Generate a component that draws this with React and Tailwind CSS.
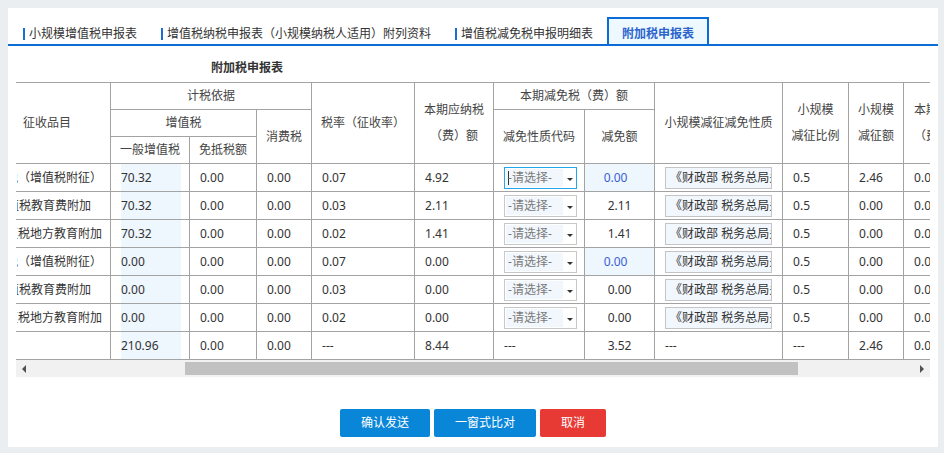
import React from 'react';

const rows = [
  { name: '城市维护建设税（增值税附征）', shift: 'ml-[-83px]', base: '70.32', rate: '0.07', tax: '4.92', jm: '0.00', blue: true, focus: true, jz: '2.46' },
  { name: '增值税教育费附加', shift: 'ml-[-22px]', base: '70.32', rate: '0.03', tax: '2.11', jm: '2.11', jz: '0.00' },
  { name: '增值税地方教育附加', shift: 'ml-[-23px]', base: '70.32', rate: '0.02', tax: '1.41', jm: '1.41', jz: '0.00' },
  { name: '城市维护建设税（增值税附征）', shift: 'ml-[-83px]', base: '0.00', rate: '0.07', tax: '0.00', jm: '0.00', blue: true, jz: '0.00' },
  { name: '增值税教育费附加', shift: 'ml-[-22px]', base: '0.00', rate: '0.03', tax: '0.00', jm: '0.00', jz: '0.00' },
  { name: '增值税地方教育附加', shift: 'ml-[-23px]', base: '0.00', rate: '0.02', tax: '0.00', jm: '0.00', jz: '0.00' },
];

const th = 'border border-[#a3a3a3] p-0 text-center font-normal text-[#444]';
const td = 'border border-[#a3a3a3] p-0 pl-[10px] text-left text-[#333]';

function Select({ focus }) {
  return (
    <div className={focus ? 'flex h-[22px] w-[73px] items-center border border-[#22a7ec] bg-white pl-px' : 'flex h-[22px] w-[73px] items-center border border-[#c8c8c8] bg-white pl-px'}>
      <div className="flex h-[18px] w-[57px] items-center whitespace-nowrap bg-[#f1f7fd] pl-[2px] text-[#7a7a7a]">
        {focus && <span className="h-[14px] w-px bg-[#333]" />}
        <span className={focus ? 'ml-[-1px]' : ''}>-请选择-</span>
      </div>
      <div className="flex flex-1 items-center justify-center pt-[3px]">
        <span className="h-0 w-0 border-x-[3px] border-t-[3px] border-x-transparent border-t-[#333]" />
      </div>
    </div>
  );
}

function Tab({ children }) {
  return (
    <div className="flex h-[20px] items-center text-[#333]">
      <span className="mr-[4px] h-[12px] w-[2px] bg-[#1b6fd2]" />
      {children}
    </div>
  );
}

export default function App() {
  return (
    <div className="h-[453px] w-[944px] bg-[#eaeef0] pl-[8px] pt-[8px] font-['Noto_Sans','Noto_Sans_CJK_SC',sans-serif] text-[12px]">
      <div className="h-[439px] w-[930px] bg-white">
        {/* tabs */}
        <div className="flex h-[38px] items-end border-b-2 border-[#0b6cd6] pl-[15px]">
          <Tab>小规模增值税申报表</Tab>
          <div className="w-[24px]" />
          <Tab>增值税纳税申报表（小规模纳税人适用）附列资料</Tab>
          <div className="w-[24px]" />
          <Tab>增值税减免税申报明细表</Tab>
          <div className="w-[14px]" />
          <div className="flex h-[27px] w-[102px] items-center justify-center border-2 border-b-0 border-[#0b6cd6] bg-[#eef9ff] pt-[5px] font-bold text-[#2a64cc]">
            附加税申报表
          </div>
        </div>

        <div className="flex h-[36px] items-center pl-[203px] pt-[8px] font-bold text-[#333]">附加税申报表</div>

        <div className="ml-[8px] w-[914px] overflow-hidden">
          <table className="ml-[-1px] w-[978px] table-fixed border-collapse">
            <colgroup>
              <col className="w-[95px]" />
              <col className="w-[79px]" />
              <col className="w-[67px]" />
              <col className="w-[55px]" />
              <col className="w-[103px]" />
              <col className="w-[79px]" />
              <col className="w-[91px]" />
              <col className="w-[70px]" />
              <col className="w-[128px]" />
              <col className="w-[66px]" />
              <col className="w-[55px]" />
              <col className="w-[90px]" />
            </colgroup>
            <thead>
              <tr className="h-[27px]">
                <th rowSpan={3} className="border border-[#a3a3a3] p-0 pl-[7px] text-left font-normal text-[#444]">征收品目</th>
                <th colSpan={3} className={th}>计税依据</th>
                <th rowSpan={3} className={th}>税率（征收率）</th>
                <th rowSpan={3} className={th + ' leading-[26px]'}>本期应纳税<br />（费）额</th>
                <th colSpan={2} className={th}>本期减免税（费）额</th>
                <th rowSpan={3} className={th}>小规模减征减免性质</th>
                <th rowSpan={3} className={th + ' leading-[26px]'}>小规模<br />减征比例</th>
                <th rowSpan={3} className={th + ' leading-[26px]'}>小规模<br />减征额</th>
                <th rowSpan={3} className="whitespace-nowrap border border-[#a3a3a3] p-0 pl-[10px] text-left font-normal leading-[26px] text-[#444]">本期已缴税<br />（费）额</th>
              </tr>
              <tr className="h-[27px]">
                <th colSpan={2} className={th}>增值税</th>
                <th rowSpan={2} className={th}>消费税</th>
                <th rowSpan={2} className={th}>减免性质代码</th>
                <th rowSpan={2} className={th}>减免额</th>
              </tr>
              <tr className="h-[27px]">
                <th className={th}>一般增值税</th>
                <th className={th}>免抵税额</th>
              </tr>
            </thead>
            <tbody>
              {rows.map((r, i) => (
                <tr key={i} className="h-[28px]">
                  <td className="border border-[#a3a3a3] p-0 pl-px text-[#333]">
                    <div className="overflow-hidden whitespace-nowrap">
                      <span className={'inline-block ' + r.shift}>{r.name}</span>
                    </div>
                  </td>
                  <td className={td}>
                    <div className="flex h-[27px] w-[60px] items-center bg-[#eef6fe]">{r.base}</div>
                  </td>
                  <td className={td}>0.00</td>
                  <td className={td}>0.00</td>
                  <td className={td}>{r.rate}</td>
                  <td className={td}>{r.tax}</td>
                  <td className={td}>
                    <Select focus={r.focus} />
                  </td>
                  {r.blue ? (
                    <td className="border border-[#a3a3a3] bg-[#eef6fe] p-0 pr-[8px] text-center text-[#3a5fd6]">{r.jm}</td>
                  ) : (
                    <td className="border border-[#a3a3a3] p-0 text-center text-[#333]">{r.jm}</td>
                  )}
                  <td className={td}>
                    <div className="h-[22px] w-[107px] overflow-hidden whitespace-nowrap border border-[#c4c4c4] bg-[#f1f7fd] pl-[4px] leading-[20px] text-[#333]">
                      《财政部 税务总局关于增值税小规模纳税人减免增值税政策的公告》
                    </div>
                  </td>
                  <td className={td}>0.5</td>
                  <td className={td}>{r.jz}</td>
                  <td className={td}>0.00</td>
                </tr>
              ))}
              <tr className="h-[28px]">
                <td className="border border-[#a3a3a3] p-0" />
                <td className={td}>
                  <div className="flex h-[27px] w-[60px] items-center bg-[#eef6fe]">210.96</div>
                </td>
                <td className={td}>0.00</td>
                <td className={td}>0.00</td>
                <td className={td}>---</td>
                <td className={td}>8.44</td>
                <td className={td}>---</td>
                <td className="border border-[#a3a3a3] p-0 text-center text-[#333]">3.52</td>
                <td className={td}>---</td>
                <td className={td}>---</td>
                <td className={td}>2.46</td>
                <td className={td}>0.00</td>
              </tr>
            </tbody>
          </table>

          {/* horizontal scrollbar */}
          <div className="flex h-[17px] w-[914px] items-center bg-[#f1f1f1]">
            <div className="flex w-[16px] justify-center">
              <span className="h-0 w-0 border-y-[4px] border-r-[4px] border-y-transparent border-r-[#505050]" />
            </div>
            <div className="w-[153px]" />
            <div className="h-[13px] w-[613px] bg-[#c1c1c1]" />
            <div className="flex-1" />
            <div className="flex w-[16px] justify-center">
              <span className="h-0 w-0 border-y-[4px] border-l-[4px] border-y-transparent border-l-[#505050]" />
            </div>
          </div>
        </div>

        <div className="mt-[32px] flex justify-center gap-[4px] text-white">
          <button className="h-[28px] w-[90px] rounded-[2px] bg-[#0a86d8]">确认发送</button>
          <button className="h-[28px] w-[102px] rounded-[2px] bg-[#0a86d8]">一窗式比对</button>
          <button className="h-[28px] w-[66px] rounded-[2px] bg-[#e83a34]">取消</button>
        </div>
      </div>
    </div>
  );
}
